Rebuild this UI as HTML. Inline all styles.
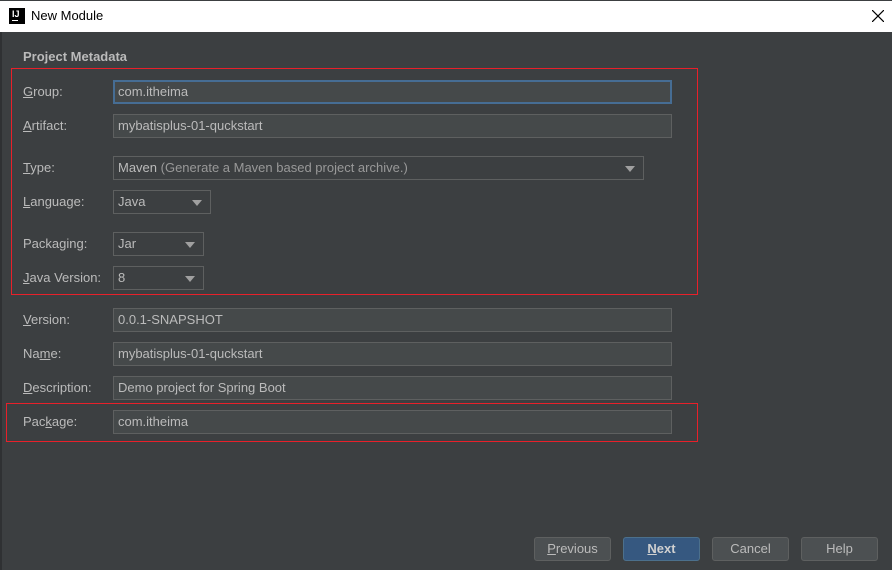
<!DOCTYPE html><html><head><style>
body{margin:0;width:892px;height:570px;background:#3c3f41;font-family:"Liberation Sans","Noto Sans CJK SC",sans-serif;font-size:13px;color:#bbbbbb;position:relative;overflow:hidden}
.a{position:absolute}
.tb{left:0;top:0;width:892px;height:32px;background:#fff;border-top:1px solid #3c3f41;box-sizing:border-box}
.in{position:absolute;left:113px;height:24px;width:559px;box-sizing:border-box;background:#45494a;border:1px solid #5e6060;padding-left:4px;line-height:22px;color:#bbbbbb}
.lb{position:absolute;left:23px;line-height:24px}
.dd::after{content:"";position:absolute;right:8px;top:9px;border-left:5px solid transparent;border-right:5px solid transparent;border-top:6px solid #a0a0a0}
.dd{background:#3c3f41}
.r{position:absolute;background:#e8202a}
.btn{position:absolute;top:537px;height:24px;width:77px;box-sizing:border-box;border:1px solid #5e6060;background:#4c5052;border-radius:3px;text-align:center;line-height:22px}
u{text-decoration:underline}
</style></head><body>
<div class="a tb"></div>
<div class="a" style="left:9px;top:8px;width:16px;height:16px;background:#000"><div class="a" style="left:3px;top:1px;color:#fff;font-size:9px;font-weight:bold;line-height:10px">IJ</div><div class="a" style="left:3px;top:12px;width:6px;height:1px;background:#fff"></div></div>
<div class="a" style="left:31px;top:8px;color:#000;font-size:13px">New Module</div>
<svg class="a" style="left:872px;top:10px" width="12" height="12"><path d="M0 0L12 12M12 0L0 12" stroke="#000" stroke-width="1.2"/></svg>
<div class="a" style="left:0;top:32px;width:2px;height:538px;background:#2f3133"></div>
<div class="a" style="left:23px;top:49px;font-weight:bold;color:#bbbbbb">Project Metadata</div>
<div class="r" style="left:11px;top:68px;width:687px;height:1px"></div>
<div class="r" style="left:11px;top:294px;width:687px;height:1px"></div>
<div class="r" style="left:11px;top:68px;width:1px;height:227px"></div>
<div class="r" style="left:697px;top:68px;width:1px;height:227px"></div>
<div class="r" style="left:6px;top:403px;width:692px;height:1px"></div>
<div class="r" style="left:6px;top:441px;width:692px;height:1px"></div>
<div class="r" style="left:6px;top:403px;width:1px;height:39px"></div>
<div class="r" style="left:697px;top:403px;width:1px;height:39px"></div>
<div class="lb" style="top:80px"><u>G</u>roup:</div><div class="in" style="top:80px;border:2px solid #466d94;padding-left:3px;line-height:20px">com.itheima</div>
<div class="lb" style="top:114px"><u>A</u>rtifact:</div><div class="in" style="top:114px">mybatisplus-01-quckstart</div>
<div class="lb" style="top:156px"><u>T</u>ype:</div><div class="in dd" style="top:156px;width:531px">Maven <span style="color:#999">(Generate a Maven based project archive.)</span></div>
<div class="lb" style="top:190px"><u>L</u>anguage:</div><div class="in dd" style="top:190px;width:98px">Java</div>
<div class="lb" style="top:232px">Packaging:</div><div class="in dd" style="top:232px;width:91px">Jar</div>
<div class="lb" style="top:266px"><u>J</u>ava Version:</div><div class="in dd" style="top:266px;width:91px">8</div>
<div class="lb" style="top:308px"><u>V</u>ersion:</div><div class="in" style="top:308px">0.0.1-SNAPSHOT</div>
<div class="lb" style="top:342px">Na<u>m</u>e:</div><div class="in" style="top:342px">mybatisplus-01-quckstart</div>
<div class="lb" style="top:376px"><u>D</u>escription:</div><div class="in" style="top:376px">Demo project for Spring Boot</div>
<div class="lb" style="top:410px">Pac<u>k</u>age:</div><div class="in" style="top:410px">com.itheima</div>
<div class="btn" style="left:534px"><u>P</u>revious</div>
<div class="btn" style="left:623px;background:#365880;border-color:#4c708c;font-weight:bold;color:#d0d0d0"><u>N</u>ext</div>
<div class="btn" style="left:712px">Cancel</div>
<div class="btn" style="left:801px">Help</div>
</body></html>
